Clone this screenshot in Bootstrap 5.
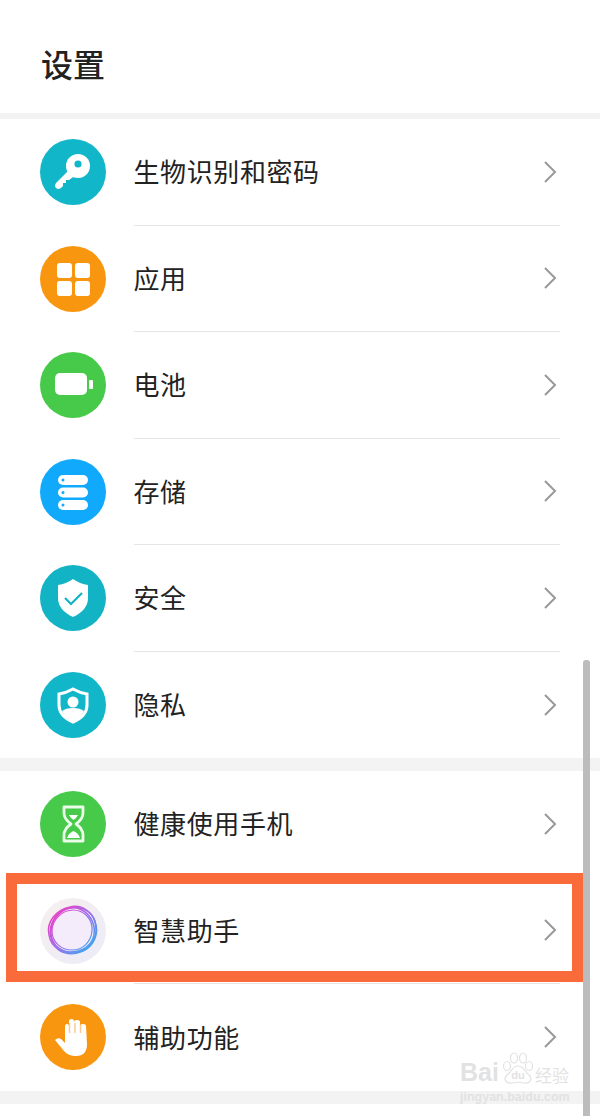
<!DOCTYPE html>
<html lang="zh-CN">
<head>
  <meta charset="UTF-8" />
  <meta name="viewport" content="width=device-width, initial-scale=1.0" />
  <title>设置</title>
  <link href="https://cdn.jsdelivr.net/npm/bootstrap@5.3.2/dist/css/bootstrap.min.css" rel="stylesheet">
  <style>
    body {
      font-family: "Noto Sans CJK SC", "Noto Sans", sans-serif;
      color: #222;
      background: #fff;
    }
    .screen {
      width: 600px;
      height: 1116px;
      overflow: hidden;
    }
    .top-bar {
      height: 113px;
      padding-left: 41px;
      padding-top: 14px;
    }
    .top-bar h1 {
      font-size: 32px;
      font-weight: 500;
      color: #222;
      margin: 0;
    }
    .band { background: #f3f3f3; }
    .band-thin { height: 6px; }
    .band-wide { height: 13px; }
    .set-row {
      height: 106.5px;
      padding-left: 40px;
    }
    .set-icon {
      width: 66px;
      height: 66px;
      flex: none;
      display: block;
    }
    .set-body {
      height: 100%;
      margin-left: 28px;
      width: 426px;
      border-bottom: 1px solid #e6e6e6;
      font-size: 26px;
      letter-spacing: 0.6px;
      padding-right: 3px;
    }
    .set-body span {
      margin-left: -0.5px;
      margin-top: -2px;
    }
    .set-row.last .set-body { border-bottom: 0; }
    .chevron { width: 14px; height: 24px; flex: none; }
    .mark-box {
      left: 6px;
      top: 873px;
      width: 577px;
      height: 109px;
      border: 11px solid #fa6b3c;
    }
    .scroll-thumb {
      left: 583px;
      top: 660px;
      width: 7px;
      height: 456px;
      background: #bcbcbc;
      border-radius: 3px 3px 0 0;
    }
    .wm {
      left: 460px;
      top: 1052px;
      width: 108px;
      color: #e2e2e2;
      line-height: 1;
      font-family: "Liberation Sans", "Noto Sans CJK SC", sans-serif;
    }
    .wm-main { font-size: 25px; font-weight: 700; height: 33px; }
    .wm-paw { width: 33px; height: 33px; flex: none; margin: 0 1px 0 2px; }
    .wm-cn { font-size: 17px; font-weight: 400; white-space: nowrap; }
    .wm-sub { font-size: 12.5px; font-weight: 700; margin-top: 6px; white-space: nowrap; }
  </style>
</head>
<body class="m-0">
  <div class="screen position-relative">
    <div class="top-bar d-flex align-items-center"><h1>设置</h1></div>
    <div class="band band-thin"></div>

    <div class="set-row d-flex align-items-center">
      <svg class="set-icon" viewBox="0 0 66 66">
        <circle cx="33" cy="33" r="33" fill="#12b6c9"/>
        <path d="M28 32 L16 44 Q14 47 16 49 Q18 51 21 49 L23 47 L23 44 L26 44 L26 41 L29 41 L36 36 Z" fill="#fff"/>
        <circle cx="38" cy="27" r="12" fill="#fff"/>
        <circle cx="38" cy="25" r="3.6" fill="#12b6c9"/>
      </svg>
      <div class="set-body d-flex align-items-center justify-content-between"><span>生物识别和密码</span>
        <svg class="chevron" viewBox="0 0 14 24"><path d="M2 2 L12 12 L2 22" fill="none" stroke="#999" stroke-width="2"/></svg></div>
    </div>

    <div class="set-row d-flex align-items-center">
      <svg class="set-icon" viewBox="0 0 66 66">
        <circle cx="33" cy="33" r="33" fill="#f9960f"/>
        <rect x="17" y="17" width="15" height="15" rx="3" fill="#fff"/>
        <rect x="35" y="17" width="15" height="15" rx="3" fill="#fff"/>
        <rect x="17" y="35" width="15" height="15" rx="3" fill="#fff"/>
        <rect x="35" y="35" width="15" height="15" rx="3" fill="#fff"/>
      </svg>
      <div class="set-body d-flex align-items-center justify-content-between"><span>应用</span>
        <svg class="chevron" viewBox="0 0 14 24"><path d="M2 2 L12 12 L2 22" fill="none" stroke="#999" stroke-width="2"/></svg></div>
    </div>

    <div class="set-row d-flex align-items-center">
      <svg class="set-icon" viewBox="0 0 66 66">
        <circle cx="33" cy="33" r="33" fill="#47c94a"/>
        <rect x="15" y="21" width="32" height="22" rx="5" fill="#fff"/>
        <rect x="49" y="28" width="4" height="9" rx="1" fill="#fff"/>
      </svg>
      <div class="set-body d-flex align-items-center justify-content-between"><span>电池</span>
        <svg class="chevron" viewBox="0 0 14 24"><path d="M2 2 L12 12 L2 22" fill="none" stroke="#999" stroke-width="2"/></svg></div>
    </div>

    <div class="set-row d-flex align-items-center">
      <svg class="set-icon" viewBox="0 0 66 66">
        <circle cx="33" cy="33" r="33" fill="#10a9fb"/>
        <rect x="18" y="16" width="30" height="10" rx="5" fill="#fff"/>
        <rect x="18" y="28.500" width="30" height="10" rx="5" fill="#fff"/>
        <rect x="18" y="41" width="30" height="10" rx="5" fill="#fff"/>
        <circle cx="23" cy="21" r="1.500" fill="#10a9fb"/>
        <circle cx="23" cy="33.500" r="1.500" fill="#10a9fb"/>
        <circle cx="23" cy="46" r="1.500" fill="#10a9fb"/>
      </svg>
      <div class="set-body d-flex align-items-center justify-content-between"><span>存储</span>
        <svg class="chevron" viewBox="0 0 14 24"><path d="M2 2 L12 12 L2 22" fill="none" stroke="#999" stroke-width="2"/></svg></div>
    </div>

    <div class="set-row d-flex align-items-center">
      <svg class="set-icon" viewBox="0 0 66 66">
        <circle cx="33" cy="33" r="33" fill="#12b3c4"/>
        <path d="M33 14 Q40 19 48 20 L48 33 Q48 45 33 52 Q18 45 18 33 L18 20 Q26 19 33 14 Z" fill="#fff"/>
        <path d="M25 33 L31 39 L42 28" fill="none" stroke="#12b3c4" stroke-width="2.200"/>
      </svg>
      <div class="set-body d-flex align-items-center justify-content-between"><span>安全</span>
        <svg class="chevron" viewBox="0 0 14 24"><path d="M2 2 L12 12 L2 22" fill="none" stroke="#999" stroke-width="2"/></svg></div>
    </div>

    <div class="set-row last d-flex align-items-center">
      <svg class="set-icon" viewBox="0 0 66 66">
        <circle cx="33" cy="33" r="33" fill="#12b6c9"/>
        <path d="M33 17 Q40 21 47 22 L47 33 Q47 44 33 50 Q19 44 19 33 L19 22 Q26 21 33 17 Z" fill="none" stroke="#fff" stroke-width="3"/>
        <circle cx="33" cy="30" r="5.500" fill="#fff"/>
        <path d="M22 39 Q26 36 33 36 Q40 36 44 39 Q41 46 33 49 Q25 46 22 39 Z" fill="#fff"/>
      </svg>
      <div class="set-body d-flex align-items-center justify-content-between"><span>隐私</span>
        <svg class="chevron" viewBox="0 0 14 24"><path d="M2 2 L12 12 L2 22" fill="none" stroke="#999" stroke-width="2"/></svg></div>
    </div>

    <div class="band band-wide"></div>

    <div class="set-row d-flex align-items-center">
      <svg class="set-icon" viewBox="0 0 66 66">
        <circle cx="33" cy="33" r="33" fill="#47c94a"/>
        <path d="M24 16 H43 V22 Q43 28 36 33 Q43 38 43 44 V50 H24 V44 Q24 38 31 33 Q24 28 24 22 Z" fill="none" stroke="#eafbea" stroke-width="2.800" stroke-linejoin="round"/>
        <path d="M29 24 H38 Q36.500 27 33.500 29 Q30.500 27 29 24 Z" fill="#fff"/>
        <path d="M27 47 Q28.500 42 33.500 40 Q38.500 42 40 47 Z" fill="#fff"/>
      </svg>
      <div class="set-body d-flex align-items-center justify-content-between"><span>健康使用手机</span>
        <svg class="chevron" viewBox="0 0 14 24"><path d="M2 2 L12 12 L2 22" fill="none" stroke="#999" stroke-width="2"/></svg></div>
    </div>

    <div class="set-row d-flex align-items-center">
      <svg class="set-icon" viewBox="0 0 66 66">
        <defs>
          <linearGradient id="ringGrad" gradientUnits="userSpaceOnUse" x1="12" y1="14" x2="52" y2="52">
            <stop offset="0" stop-color="#f03cc0"/>
            <stop offset="0.450" stop-color="#a868ea"/>
            <stop offset="1" stop-color="#35aaf0"/>
          </linearGradient>
          <linearGradient id="discGrad" x1="0" y1="0" x2="1" y2="1">
            <stop offset="0" stop-color="#f6efee"/>
            <stop offset="1" stop-color="#ecebf8"/>
          </linearGradient>
        </defs>
        <circle cx="33" cy="33" r="33" fill="url(#discGrad)"/>
        <circle cx="32.500" cy="32.500" r="21" fill="#f4ecfa"/>
        <g fill="none" stroke="url(#ringGrad)">
          <path d="M30 9 C42 6 54 15 56 27 C59 40 50 53 37 55 C24 58 11 50 9 37 C6 24 16 12 30 9 Z" stroke-width="1.500"/>
          <path d="M26 11 C38 6 52 12 55 24 C58 35 54 48 42 53 C30 58 17 53 12 43 C7 31 13 16 26 11 Z" stroke-width="1.500"/>
          <path d="M37 10 C48 13 56 24 54 37 C52 48 42 54 30 54 C18 53 10 44 11 32 C12 19 24 8 37 10 Z" stroke-width="1.500"/>
          <path d="M33 12 C44 12 53 21 52 33 C51 44 43 52 32 52 C21 52 12 44 12 33 C12 22 22 12 33 12 Z" stroke-width="1.200"/>
        </g>
      </svg>
      <div class="set-body d-flex align-items-center justify-content-between"><span>智慧助手</span>
        <svg class="chevron" viewBox="0 0 14 24"><path d="M2 2 L12 12 L2 22" fill="none" stroke="#999" stroke-width="2"/></svg></div>
    </div>

    <div class="set-row last d-flex align-items-center">
      <svg class="set-icon" viewBox="0 0 66 66">
        <circle cx="33" cy="33" r="33" fill="#f9960f"/>
        <path d="M15 36 Q18 33 21 35 L25 39 V22 Q25 20 27 20 Q29 20 29 22 V17 Q29 15 31.500 15 Q34 15 34 17 V18 Q34 16 37 16 Q40 16 40 18 V22 Q40 20 43 20 Q46 20 46 22 L47 40 Q47 52 36 52 Q28 52 24 47 Z" fill="#fff"/>
        <path d="M29.500 19 V29 M35 19 V29 M40.500 21 V29" stroke="#fbc98a" stroke-width="1.400" fill="none"/>
      </svg>
      <div class="set-body d-flex align-items-center justify-content-between"><span>辅助功能</span>
        <svg class="chevron" viewBox="0 0 14 24"><path d="M2 2 L12 12 L2 22" fill="none" stroke="#999" stroke-width="2"/></svg></div>
    </div>

    <div class="band band-wide"></div>

    <div class="mark-box position-absolute"></div>
    <div class="scroll-thumb position-absolute"></div>
    <div class="wm position-absolute">
      <div class="wm-main d-flex align-items-end">
        <span>Bai</span>
        <svg class="wm-paw" viewBox="0 0 33 33">
          <g fill="none" stroke="#e2e2e2" stroke-width="1.200">
            <ellipse cx="6" cy="14" rx="3.500" ry="4.500"/>
            <ellipse cx="13" cy="6" rx="3.500" ry="5"/>
            <ellipse cx="22" cy="6" rx="3.500" ry="5"/>
            <ellipse cx="28" cy="14" rx="3.500" ry="4.500"/>
            <path d="M17 14 C11 14 11 20 6 23 C2 27 5 32 11 31 C15 30 19 30 23 31 C29 32 32 27 28 23 C24 20 23 14 17 14 Z"/>
          </g>
          <text x="17" y="27" text-anchor="middle" font-size="11" font-family="Liberation Sans" font-weight="700" fill="#e2e2e2">du</text>
        </svg>
        <span class="wm-cn">经验</span>
      </div>
      <div class="wm-sub">jingyan.baidu.com</div>
    </div>
  </div>
  <script src="https://cdn.jsdelivr.net/npm/bootstrap@5.3.2/dist/js/bootstrap.bundle.min.js"></script>
</body>
</html>
